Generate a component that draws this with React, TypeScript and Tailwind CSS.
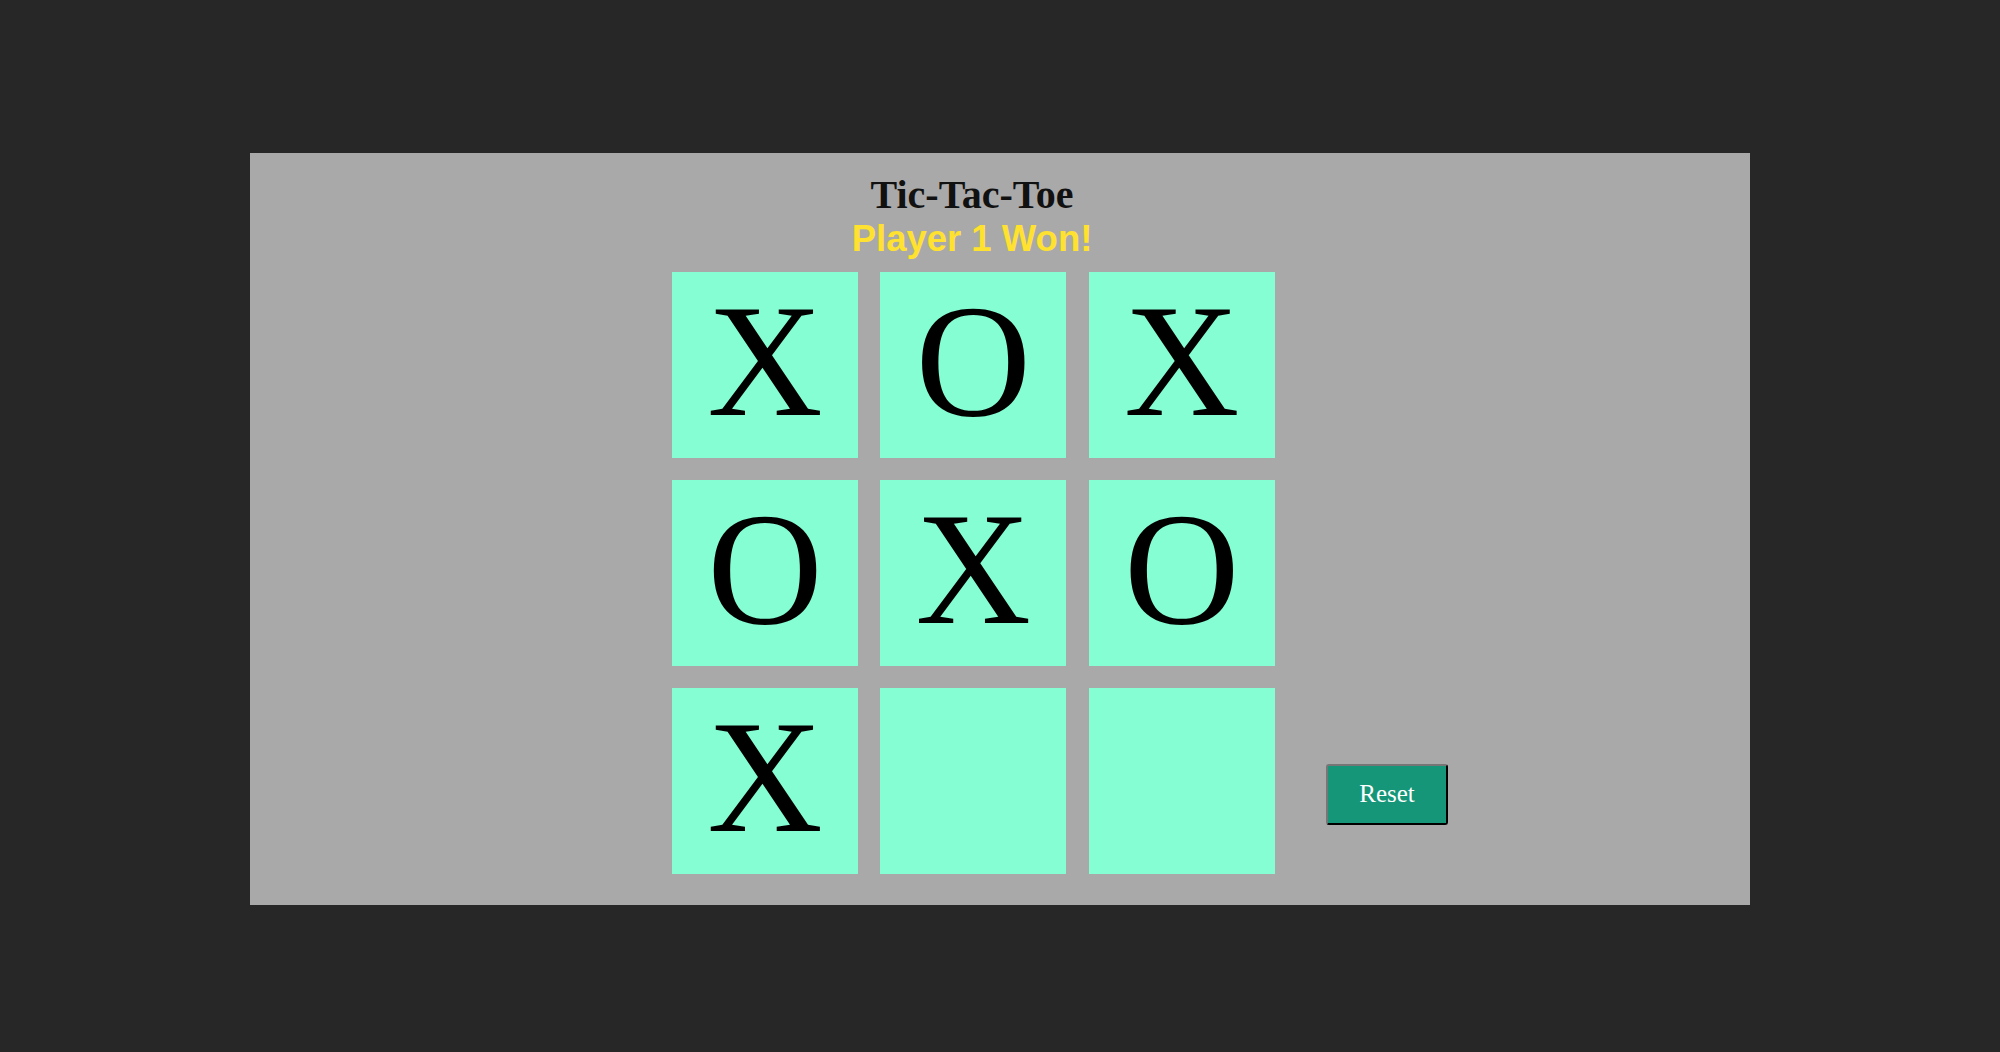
import React, { useState } from 'react';

type Mark = 'X' | 'O' | '';

const App: React.FC = () => {
  const [cells, setCells] = useState<Mark[]>(['X', 'O', 'X', 'O', 'X', 'O', 'X', '', '']);

  return (
    <div className="min-h-screen w-full bg-[#272727] pt-[153px]">
      <div className="mx-auto h-[752px] w-[1500px] bg-[#a9a9a9] pl-[422px] pt-[22px]">
        <div className="flex w-[600px] flex-col items-center">
          <h1 className="text-[40px] font-bold leading-none text-[#111]" style={{ fontFamily: '"Liberation Serif", serif' }}>
            Tic-Tac-Toe
          </h1>
          <p className="mt-[6px] text-[36.5px] font-bold leading-none text-[#ffe12f]" style={{ fontFamily: '"Liberation Sans", sans-serif' }}>
            Player 1 Won!
          </p>
        </div>
        <div className="mt-[14px] flex items-end">
          <div className="grid w-[603px] grid-cols-3 gap-[22px]">
            {cells.map((c, i) => (
              <div
                key={i}
                className="flex h-[186px] w-[186px] items-center justify-center bg-[#85fed4] pb-[8px]"
              >
                <span className="text-[160px] leading-none text-black" style={{ fontFamily: '"Liberation Serif", serif' }}>
                  {c}
                </span>
              </div>
            ))}
          </div>
          <button
            type="button"
            onClick={() => setCells(['', '', '', '', '', '', '', '', ''])}
            className="mb-[49px] ml-[51px] h-[61px] w-[122px] rounded-[3px] border-2 border-b-black border-l-[#767676] border-r-black border-t-[#767676] bg-[#159679] text-[25px] text-white"
            style={{ fontFamily: '"Liberation Serif", serif' }}
          >
            Reset
          </button>
        </div>
      </div>
    </div>
  );
};

export default App;
